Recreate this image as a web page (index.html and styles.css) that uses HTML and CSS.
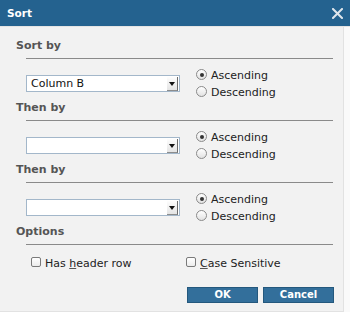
FILE: index.html
```html
<!DOCTYPE html>
<html>
<head>
<meta charset="utf-8">
<link rel="stylesheet" href="styles.css">
</head>
<body>
<div class="dialog">
  <div class="titlebar">
    <span class="title">Sort</span>
    <svg class="close" width="11" height="11" viewBox="0 0 11 11"><path d="M1 1 L10 10 M10 1 L1 10" stroke="#dfe6ec" stroke-width="2" stroke-linecap="square"/></svg>
  </div>
  <div class="content">
    <div class="section">
      <div class="heading">Sort by</div>
      <div class="rule"></div>
      <div class="row">
        <div class="select"><span class="value">Column B</span><span class="arrow"><span class="tri"></span></span></div>
        <div class="radios">
          <div class="opt"><span class="radio checked"></span><span>Ascending</span></div>
          <div class="opt"><span class="radio"></span><span>Descending</span></div>
        </div>
      </div>
    </div>
    <div class="section">
      <div class="heading">Then by</div>
      <div class="rule"></div>
      <div class="row">
        <div class="select"><span class="value"></span><span class="arrow"><span class="tri"></span></span></div>
        <div class="radios">
          <div class="opt"><span class="radio checked"></span><span>Ascending</span></div>
          <div class="opt"><span class="radio"></span><span>Descending</span></div>
        </div>
      </div>
    </div>
    <div class="section">
      <div class="heading">Then by</div>
      <div class="rule"></div>
      <div class="row">
        <div class="select"><span class="value"></span><span class="arrow"><span class="tri"></span></span></div>
        <div class="radios">
          <div class="opt"><span class="radio checked"></span><span>Ascending</span></div>
          <div class="opt"><span class="radio"></span><span>Descending</span></div>
        </div>
      </div>
    </div>
    <div class="section">
      <div class="heading">Options</div>
      <div class="rule"></div>
      <div class="checks">
        <div class="check first"><span class="box"></span><span>Has <u>h</u>eader row</span></div>
        <div class="check"><span class="box"></span><span><u>C</u>ase Sensitive</span></div>
      </div>
    </div>
    <div class="buttons">
      <div class="btn">OK</div>
      <div class="btn">Cancel</div>
    </div>
  </div>
</div>
</body>
</html>
```

FILE: styles.css
```css
html, body {
  margin: 0;
  padding: 0;
  background: #fafafa;
}
.dialog {
  width: 350px;
  height: 312px;
  font-family: "DejaVu Sans", Verdana, sans-serif;
  font-size: 11px;
  color: #222;
  background: #fafafa;
  display: flex;
  flex-direction: column;
}
.titlebar {
  height: 27px;
  background: #24628f;
  display: flex;
  align-items: center;
  justify-content: space-between;
  padding: 0 7px;
  border-bottom: 1px solid #e4e4e4;
}
.title {
  color: #fff;
  font-weight: bold;
  font-size: 10.5px;
}
.close {
  display: block;
  margin-top: 1px;
}
.content {
  width: 327px;
  height: 280px;
  background: #f2f2f2;
  padding: 12px 0 0 16px;
  border-right: 1px solid #e2e2e2;
  border-bottom: 1px solid #e2e2e2;
}
.heading {
  font-weight: bold;
  color: #555;
  line-height: 13px;
  height: 13px;
}
.rule {
  margin: 6px 0 0 10px;
  width: 307px;
  border-top: 1px solid #8a8a8a;
}
.row {
  display: flex;
  align-items: flex-start;
  margin-top: 8px;
  padding-left: 10px;
  height: 34px;
}
.select {
  margin-top: 8px;
  width: 152px;
  height: 15px;
  border: 1px solid #a3b7ca;
  background: #fff;
  display: flex;
  align-items: center;
  justify-content: space-between;
}
.value {
  padding-left: 4px;
  line-height: 15px;
  color: #111;
}
.arrow {
  width: 10px;
  height: 13px;
  margin-right: 1px;
  background: linear-gradient(#fdfdfd, #e4e4e4);
  border-right: 1px solid #6d6d6d;
  border-bottom: 1px solid #8d8d8d;
  display: flex;
  align-items: center;
  justify-content: center;
}
.tri {
  width: 0;
  height: 0;
  border-left: 3px solid transparent;
  border-right: 3px solid transparent;
  border-top: 4px solid #111;
  margin-top: 1px;
}
.radios {
  margin-left: 16px;
  display: flex;
  flex-direction: column;
}
.opt {
  line-height: 17px;
  height: 17px;
  display: flex;
  align-items: center;
  color: #222;
}
.radio {
  width: 9px;
  height: 9px;
  border: 1px solid #8a8a8a;
  border-radius: 50%;
  background: linear-gradient(#ffffff, #e2e2e2);
  margin-right: 4px;
  margin-top: -2px;
  display: flex;
  align-items: center;
  justify-content: center;
  box-sizing: content-box;
}
.radio.checked::after {
  content: "";
  width: 4px;
  height: 4px;
  border-radius: 50%;
  background: #333;
}
.checks {
  display: flex;
  margin-top: 10px;
  height: 17px;
}
.check {
  display: flex;
  align-items: center;
  line-height: 17px;
  color: #222;
}
.check.first {
  margin-left: 15px;
  width: 155px;
}
.check u {
  text-decoration-color: #555;
}
.box {
  width: 8px;
  height: 8px;
  border: 1px solid #7a7a7a;
  border-radius: 2px;
  background: linear-gradient(#fff, #ececec);
  margin-right: 4px;
  margin-top: -3px;
}
.buttons {
  display: flex;
  justify-content: flex-end;
  gap: 5px;
  margin-top: 15px;
  width: 318px;
}
.btn {
  width: 69px;
  height: 14px;
  border: 1px solid #24587d;
  background: #336f9b;
  color: #fff;
  font-weight: bold;
  font-size: 10px;
  line-height: 14px;
  text-align: center;
}
```
